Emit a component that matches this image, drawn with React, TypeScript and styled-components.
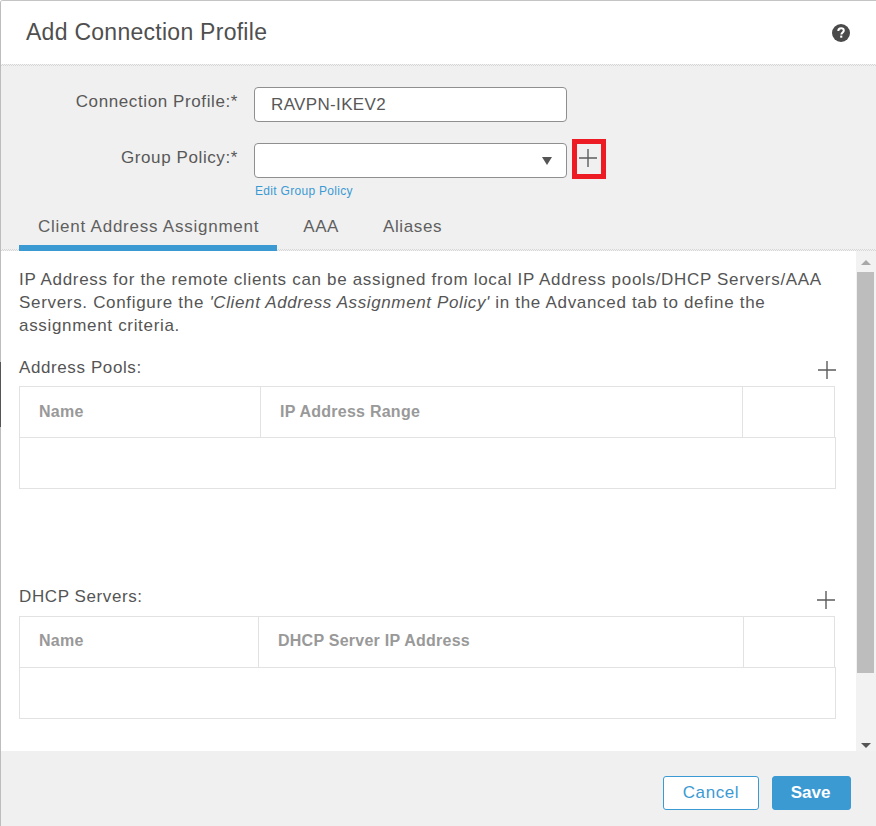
import React from 'react';
import styled, { createGlobalStyle } from 'styled-components';

const GlobalStyle = createGlobalStyle`
  html, body {
    margin: 0;
    padding: 0;
    background: #ffffff;
  }

  body {
    font-family: "Liberation Sans", Arial, sans-serif;
  }
`;

const Modal = styled.div`
  width: 876px;
  height: 826px;
  box-sizing: border-box;
  border-top: 1px solid #c4c4c4;
  border-left: 1px solid #bdbdbd;
  border-top-left-radius: 3px;
  display: flex;
  flex-direction: column;
  overflow: hidden;
  color: #555555;
`;

const Header = styled.header`
  height: 63px;
  flex: none;
  box-sizing: border-box;
  padding: 0 26px 0 25px;
  display: flex;
  align-items: center;
  justify-content: space-between;
  background: #ffffff;
`;

const Title = styled.h1`
  margin: 0;
  font-size: 23px;
  font-weight: 400;
  letter-spacing: 0.27px;
  color: #4f4f4f;
`;

const HelpSvg = styled.svg`
  margin-top: 1px;
`;

const Top = styled.div`
  height: 187px;
  flex: none;
  background: #f0f0f0;
  display: flex;
  flex-direction: column;
`;

const Divider = styled.div<{ $below?: number }>`
  flex: none;
  height: 2px;
  margin-bottom: ${({ $below }) => $below ?? 0}px;
  background: repeating-conic-gradient(#d6d6d6 0 25%, #f2f2f2 0 50%) 0 0 / 2px 2px;
`;

const FormRow = styled.div<{ $gap: number }>`
  display: grid;
  grid-template-columns: 237px 313px auto;
  column-gap: 16px;
  align-items: center;
  margin-bottom: ${({ $gap }) => $gap}px;
`;

const Label = styled.label`
  font-size: 17px;
  letter-spacing: 0.6px;
  text-align: right;
  color: #585858;
  position: relative;
  top: -3px;
`;

const Field = styled.div`
  height: 35px;
  box-sizing: border-box;
  background: #ffffff;
  border: 1px solid #8f8f8f;
  border-radius: 4px;
  padding: 0 15px 0 16px;
  display: flex;
  align-items: center;
  justify-content: space-between;
  font-size: 17px;
  letter-spacing: 0.35px;
  color: #585858;
`;

const Caret = styled.span`
  width: 0;
  height: 0;
  margin-right: -1px;
  border-left: 5px solid transparent;
  border-right: 5px solid transparent;
  border-top: 8px solid #555555;
`;

const AddHighlight = styled.div`
  width: 34px;
  height: 40px;
  margin: -4px 0 -1px -11px;
  padding: 0 2px 3px 0;
  box-sizing: border-box;
  border: 5px solid #ed1c24;
  display: flex;
  align-items: center;
  justify-content: center;
`;

const EditLink = styled.a`
  margin: 6px 0 0 254px;
  font-size: 12px;
  letter-spacing: 0.3px;
  line-height: 14px;
  color: #3c9ad3;
`;

const Tabs = styled.div`
  display: flex;
  margin: auto 0 -2px 18px;
`;

const Tab = styled.div<{ $active?: boolean }>`
  position: relative;
  box-sizing: border-box;
  height: 38px;
  padding: 4px 18px 0 19px;
  margin-right: 7px;
  font-size: 17px;
  letter-spacing: ${({ $active }) => ($active ? 0.76 : 0.6)}px;
  color: #5f5f5f;
  border-bottom: 6px solid ${({ $active }) => ($active ? '#3c9ad3' : 'transparent')};

  ${({ $active }) => $active && `
    &::after {
      content: '';
      position: absolute;
      left: 0;
      right: 0;
      bottom: -5px;
      height: 4px;
      background:
        radial-gradient(circle, #a08a70 0.6px, transparent 0.7px) 0 0 / 4px 4px,
        radial-gradient(circle, #a08a70 0.6px, transparent 0.7px) 2px 2px / 4px 4px;
    }
  `}
`;

const BodyWrap = styled.div`
  flex: none;
  height: 500px;
  display: flex;
  background: #ffffff;
`;

const Content = styled.div`
  flex: 1;
  min-width: 0;
  padding: 17px 0 0 18px;
`;

const Intro = styled.p`
  margin: 0;
  width: 815px;
  font-size: 17px;
  letter-spacing: 0.68px;
  line-height: 23px;
  color: #555555;

  em {
    letter-spacing: 0.62px;
  }
`;

const SectionHead = styled.div<{ $top: number; $height: number }>`
  margin-top: ${({ $top }) => $top}px;
  width: 817px;
  height: ${({ $height }) => $height}px;
  display: flex;
  align-items: flex-start;
  justify-content: space-between;
`;

const SectionLabel = styled.div`
  font-size: 17px;
  letter-spacing: 0.6px;
  line-height: 20px;
  color: #555555;
`;

const Table = styled.div`
  width: 817px;
  font-size: 16px;
  letter-spacing: 0.25px;
`;

const TableHead = styled.div<{ $first: number; $last: number }>`
  width: 816px;
  height: 52px;
  box-sizing: border-box;
  border: 1px solid #e2e2e2;
  display: grid;
  grid-template-columns: ${({ $first, $last }) => `${$first}px 1fr ${$last}px`};
`;

const HeadCell = styled.div<{ $lift: number }>`
  display: flex;
  align-items: center;
  padding-left: 19px;
  padding-bottom: ${({ $lift }) => $lift}px;
  font-weight: 700;
  color: #999999;

  & + & {
    border-left: 1px solid #e2e2e2;
  }
`;

const EmptyRow = styled.div`
  height: 52px;
  margin-top: -1px;
  box-sizing: border-box;
  border: 1px solid #e2e2e2;
`;

const Scrollbar = styled.div`
  width: 20px;
  flex: none;
  background: #f2f2f2;
  display: flex;
  flex-direction: column;
  align-items: center;
`;

const ScrollArrow = styled.span<{ $up?: boolean }>`
  flex: none;
  width: 0;
  height: 0;
  margin: ${({ $up }) => ($up ? '9px 0 7px' : '70px 0 0')};
  border-left: 5px solid transparent;
  border-right: 5px solid transparent;
  ${({ $up }) => ($up ? 'border-bottom: 5px solid #a8a8a8;' : 'border-top: 5px solid #555555;')}
`;

const ScrollThumb = styled.div`
  flex: none;
  width: 17px;
  height: 401px;
  margin-left: -1px;
  background: #bdbdbd;
`;

const Footer = styled.footer`
  flex: 1;
  background: #f0f0f0;
  display: flex;
  justify-content: flex-end;
  align-items: flex-start;
  gap: 13px;
  padding: 25px 25px 0 0;
`;

const Button = styled.button<{ $primary?: boolean }>`
  height: 34px;
  width: ${({ $primary }) => ($primary ? 79 : 96)}px;
  box-sizing: border-box;
  border-radius: 3px;
  border: 1px solid #3c9ad3;
  padding: 0 ${({ $primary }) => ($primary ? 2 : 0)}px 0 0;
  font-family: inherit;
  font-size: 17px;
  letter-spacing: ${({ $primary }) => ($primary ? 0 : 0.6)}px;
  font-weight: ${({ $primary }) => ($primary ? 700 : 400)};
  background: ${({ $primary }) => ($primary ? '#3c9ad3' : '#ffffff')};
  color: ${({ $primary }) => ($primary ? '#ffffff' : '#3c9ad3')};
`;

const EdgeMark = styled.div`
  position: absolute;
  left: 0;
  top: 362px;
  width: 1px;
  height: 65px;
  background: #555555;
`;

function HelpIcon (): React.ReactElement {
  return (
    <HelpSvg width='18' height='18' viewBox='0 0 18 18'>
      <circle cx='9' cy='9' r='9' fill='#4a4a4a' />
      <path d='M6.3 7c0-1.7 1.2-2.7 2.8-2.7s2.7 1 2.7 2.3c0 1.9-2.4 1.9-2.4 3.9' fill='none' stroke='#ffffff' strokeWidth='2' />
      <rect x='8.2' y='11.6' width='2.1' height='2.1' fill='#ffffff' />
    </HelpSvg>
  );
}

function PlusIcon (): React.ReactElement {
  return (
    <svg width='18' height='18' viewBox='0 0 18 18'>
      <path d='M0 9h18M9 0v18' stroke='#5c5c5c' strokeWidth='1.4' fill='none' />
    </svg>
  );
}

const SectionPlus = styled.span<{ $down: number; $right: number }>`
  display: flex;
  margin-top: ${({ $down }) => $down}px;
  margin-right: ${({ $right }) => $right}px;
`;

interface SectionProps {
  columns: string[];
  first: number;
  headHeight: number;
  last: number;
  lift: number;
  name: string;
  plusDown: number;
  plusRight: number;
  top: number;
}

function Section ({ columns, first, headHeight, last, lift, name, plusDown, plusRight, top }: SectionProps): React.ReactElement<SectionProps> {
  return (
    <>
      <SectionHead $height={headHeight} $top={top}>
        <SectionLabel>{name}</SectionLabel>
        <SectionPlus $down={plusDown} $right={plusRight}><PlusIcon /></SectionPlus>
      </SectionHead>
      <Table>
        <TableHead $first={first} $last={last}>
          {columns.map((column) => <HeadCell $lift={lift} key={column}>{column}</HeadCell>)}
          <HeadCell $lift={lift} />
        </TableHead>
        <EmptyRow />
      </Table>
    </>
  );
}

export default function App (): React.ReactElement {
  return (
    <>
      <GlobalStyle />
      <EdgeMark />
      <Modal>
        <Header>
          <Title>Add Connection Profile</Title>
          <HelpIcon />
        </Header>
        <Top>
          <Divider $below={21} />
          <FormRow $gap={21}>
            <Label>Connection Profile:*</Label>
            <Field>RAVPN-IKEV2</Field>
          </FormRow>
          <FormRow $gap={0}>
            <Label>Group Policy:*</Label>
            <Field><span /><Caret /></Field>
            <AddHighlight><PlusIcon /></AddHighlight>
          </FormRow>
          <EditLink>Edit Group Policy</EditLink>
          <Tabs>
            <Tab $active>Client Address Assignment</Tab>
            <Tab>AAA</Tab>
            <Tab>Aliases</Tab>
          </Tabs>
          <Divider />
        </Top>
        <BodyWrap>
          <Content>
            <Intro>
              IP Address for the remote clients can be assigned from local IP Address pools/DHCP Servers/AAA Servers. Configure the <em>'Client Address Assignment Policy'</em> in the Advanced tab to define the assignment criteria.
            </Intro>
            <Section
              columns={['Name', 'IP Address Range']}
              first={240}
              headHeight={28}
              last={92}
              lift={0}
              name='Address Pools:'
              plusDown={3}
              plusRight={0}
              top={21}
            />
            <Section
              columns={['Name', 'DHCP Server IP Address']}
              first={238}
              headHeight={29}
              last={91}
              lift={2}
              name='DHCP Servers:'
              plusDown={4}
              plusRight={1}
              top={98}
            />
          </Content>
          <Scrollbar>
            <ScrollArrow $up />
            <ScrollThumb />
            <ScrollArrow />
          </Scrollbar>
        </BodyWrap>
        <Footer>
          <Button>Cancel</Button>
          <Button $primary>Save</Button>
        </Footer>
      </Modal>
    </>
  );
}
